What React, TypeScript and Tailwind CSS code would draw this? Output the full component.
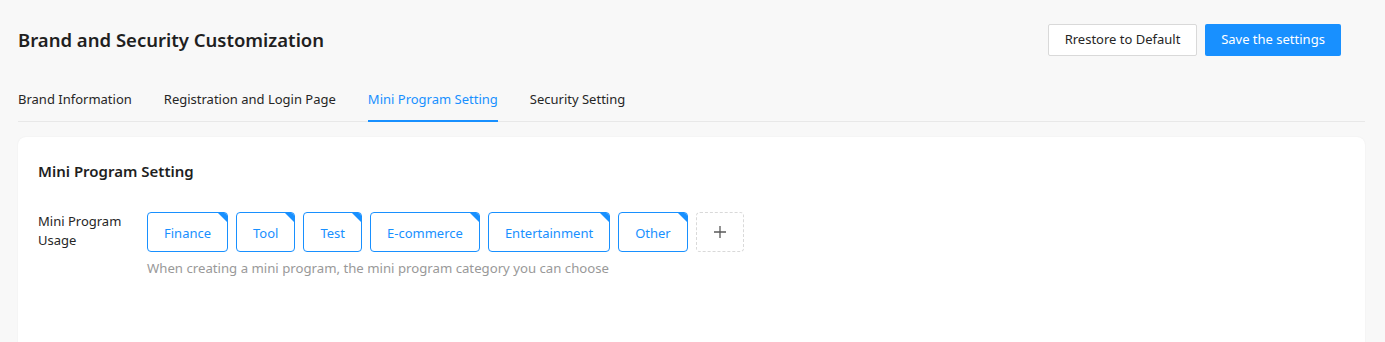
import React from "react";

const tags = ["Finance", "Tool", "Test", "E-commerce", "Entertainment", "Other"];
const tabs = ["Brand Information", "Registration and Login Page", "Mini Program Setting", "Security Setting"];

export default function App() {
  return (
    <div className="min-h-[342px] w-full bg-[#f8f8f8] pl-[18px] pr-[20px] pt-[24px] text-[#262626]" style={{ fontFamily: '"Noto Sans", "Open Sans", sans-serif' }}>
      <div className="flex items-center justify-between pr-[24px]">
        <h1 className="text-[18.5px] font-semibold leading-[32px] text-[#1f1f1f]">Brand and Security Customization</h1>
        <div className="flex gap-[8px]">
          <button className="h-[32px] w-[149px] rounded-[2px] border border-[#d9d9d9] bg-white text-[13px] text-[#262626]">Rrestore to Default</button>
          <button className="h-[32px] w-[136px] rounded-[2px] bg-[#1890ff] text-[13px] text-white">Save the settings</button>
        </div>
      </div>
      <div className="mt-[32px] flex gap-[32px] border-b border-[#e8e8e8]">
        {tabs.map((t, i) => (
          <div key={t} className={`relative pb-[11px] text-[13px] leading-[22px] ${i === 2 ? "text-[#1890ff]" : "text-[#262626]"}`}>
            {t}
            {i === 2 && <div className="absolute bottom-[-1px] left-0 right-0 h-[2px] bg-[#1890ff]" />}
          </div>
        ))}
      </div>
      <div className="mt-[15px] h-[220px] rounded-t-[8px] bg-white px-[20px] pt-[22px] shadow-[0_0_2px_rgba(0,0,0,0.06)]">
        <div className="text-[15px] font-semibold leading-[24px] text-[#1f1f1f]">Mini Program Setting</div>
        <div className="mt-[29px] flex">
          <div className="w-[109px] text-[13px] leading-[19px] text-[#262626]">Mini Program<br />Usage</div>
          <div className="flex flex-col">
            <div className="flex gap-[8px]">
              {tags.map((t) => (
                <div key={t} className="relative flex h-[40px] items-center rounded-[4px] border border-[#1890ff] px-[16px] pt-[3px] text-[13px] text-[#1890ff] overflow-hidden">
                  {t}
                  <div className="absolute right-0 top-0 h-0 w-0 border-l-[9px] border-t-[9px] border-l-transparent border-t-[#1890ff]" />
                </div>
              ))}
              <div className="flex h-[40px] w-[48px] items-center justify-center rounded-[4px] border border-dashed border-[#d9d9d9] text-[#595959]">
                <svg width="14" height="14" viewBox="0 0 14 14" fill="none" stroke="#595959" strokeWidth="1.3"><path d="M7 1v12M1 7h12" /></svg>
              </div>
            </div>
            <div className="mt-[6px] text-[13.2px] leading-[20px] text-[#999]">When creating a mini program, the mini program category you can choose</div>
          </div>
        </div>
      </div>
    </div>
  );
}
